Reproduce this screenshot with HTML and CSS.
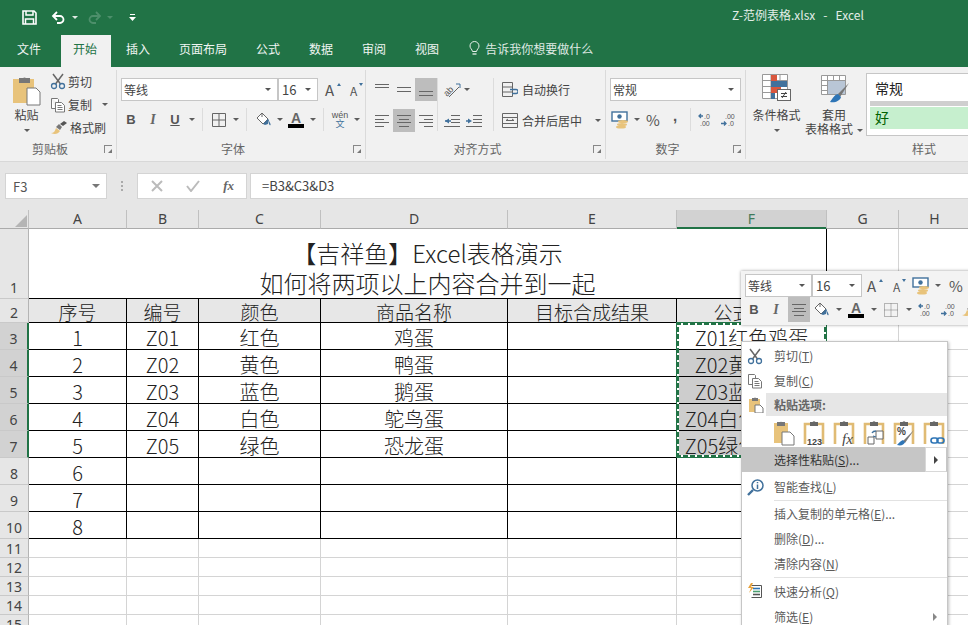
FILE: index.html
```html
<!DOCTYPE html>
<html lang="zh-CN">
<head>
<meta charset="utf-8">
<title>Z-范例表格.xlsx - Excel</title>
<link rel="stylesheet" href="styles.css">
</head>
<body>
<svg class="defs" xmlns="http://www.w3.org/2000/svg">
  <symbol id="scissors" viewBox="0 0 16 17">
    <path d="M3 1l7.500 10M13 1L5.500 11" fill="none" stroke="#666" stroke-width="1.500"/>
    <circle cx="4" cy="13" r="2.500" fill="none" stroke="#41719c" stroke-width="1.300"/>
    <circle cx="12" cy="13" r="2.500" fill="none" stroke="#41719c" stroke-width="1.300"/>
  </symbol>
  <symbol id="copy" viewBox="0 0 16 16">
    <path d="M1.500 1.500h6l1 1v3M1.500 1.500v10h3.500" fill="#fff" stroke="#777"/>
    <path d="M5.500 5.500h6l3 3v6.500h-9z" fill="#fff" stroke="#777"/>
    <path d="M7.500 8.500h4M7.500 10.500h5M7.500 12.500h5" stroke="#777"/>
  </symbol>
  <symbol id="brush" viewBox="0 0 18 14">
    <path d="M1 12c3 0 4-2 5-5l4 3c-2 3-5 4-9 2z" fill="#e8c37b"/>
    <path d="M6 6l3-3 3 3-2 3z" fill="#777"/>
    <path d="M10 3l4-3 3 2-4 3z" fill="#555"/>
  </symbol>
  <symbol id="money" viewBox="0 0 18 18">
    <rect x="1" y="1" width="15" height="9" fill="#fff" stroke="#41719c" stroke-width="1.400"/>
    <circle cx="8.500" cy="5.500" r="2.200" fill="#41719c"/>
    <ellipse cx="12" cy="10.500" rx="5" ry="1.500" fill="#e8c37b"/>
    <ellipse cx="11" cy="13.500" rx="5" ry="1.500" fill="#e8c37b"/>
    <ellipse cx="10" cy="16" rx="5" ry="1.500" fill="#e8c37b"/>
  </symbol>
  <symbol id="fill" viewBox="0 0 18 16">
    <path d="M8 1l6 6-5 5-6-6z" fill="#fff" stroke="#666"/>
    <path d="M8 1v4" stroke="#666"/>
    <path d="M9 12l5-5 1 1-1 4-3 1z" fill="#41719c"/>
    <path d="M15 9c1 2 2 3 1.500 4s-2 0-1.500-4z" fill="#41719c"/>
  </symbol>
  <symbol id="inc" viewBox="0 0 16 14">
    <path d="M5 3H1M3 1L1 3l2 2" fill="none" stroke="#41719c" stroke-width="1.300"/>
    <text x="6" y="6" font-size="7" font-family="Liberation Sans, sans-serif" fill="#555">.0</text>
    <text x="2" y="13" font-size="7" font-family="Liberation Sans, sans-serif" fill="#555">.00</text>
  </symbol>
  <symbol id="dec" viewBox="0 0 16 14">
    <text x="5" y="6" font-size="7" font-family="Liberation Sans, sans-serif" fill="#555">.00</text>
    <path d="M1 10.500h5M4 8.500l2 2-2 2" fill="none" stroke="#41719c" stroke-width="1.300"/>
    <text x="8" y="13" font-size="7" font-family="Liberation Sans, sans-serif" fill="#555">.0</text>
  </symbol>
  <symbol id="clip" viewBox="0 0 22 27">
    <path d="M2 25V5h18v20" fill="#fff" stroke="#e0bb74" stroke-width="2.600"/>
    <path d="M7 3h2.500a2 2 0 0 1 3 0H15v4H7z" fill="#666"/>
  </symbol>
</svg>

<div class="app">
  <header class="titlebar">
    <div class="qat">
      <svg class="q-save" width="15" height="15" viewBox="0 0 15 15"><path d="M1 1h11l2 2v11H1z" fill="none" stroke="#fff" stroke-width="1.600"/><path d="M4 1v4h7V1M3.500 14V9h8v5" fill="none" stroke="#fff" stroke-width="1.500"/></svg>
      <svg class="q-undo" width="15" height="13" viewBox="0 0 15 13"><path d="M2 5h7a3.500 3.500 0 0 1 0 7H6" fill="none" stroke="#fff" stroke-width="1.800"/><path d="M6 1L2 5l4 4" fill="none" stroke="#fff" stroke-width="1.800"/></svg>
      <span class="caret white"></span>
      <svg class="q-redo" width="15" height="13" viewBox="0 0 15 13"><path d="M13 5H6a3.500 3.500 0 0 0 0 7h3" fill="none" stroke="#4d8f6b" stroke-width="1.800"/><path d="M9 1l4 4-4 4" fill="none" stroke="#4d8f6b" stroke-width="1.800"/></svg>
      <span class="caret dim"></span>
      <svg class="q-more" width="7" height="7" viewBox="0 0 7 7"><path d="M1 .5h5" stroke="#fff"/><path d="M0 3h7L3.500 7z" fill="#fff"/></svg>
    </div>
    <div class="doc">Z-范例表格.xlsx&nbsp;&nbsp; -&nbsp;&nbsp; Excel</div>
  </header>

  <nav class="tabs">
    <a class="tab first">文件</a>
    <a class="tab active">开始</a>
    <a class="tab">插入</a>
    <a class="tab">页面布局</a>
    <a class="tab">公式</a>
    <a class="tab">数据</a>
    <a class="tab">审阅</a>
    <a class="tab">视图</a>
    <div class="tell">
      <svg width="11" height="16" viewBox="0 0 11 16"><path d="M3.500 10.500C3 8 1 7.500 1 5a4.500 4.500 0 0 1 9 0c0 2.500-2 3-2.500 5.500z" fill="none" stroke="#e8f0eb"/><path d="M3.500 13h4" stroke="#e8f0eb" stroke-width="1.300"/></svg>
      <span>告诉我你想要做什么</span>
    </div>
  </nav>

  <section class="ribbon">
    <div class="group g-clip">
      <div class="body">
        <div class="paste">
          <svg width="30" height="31" viewBox="0 0 30 31"><path d="M1 4h21v24H1z" fill="#e8c37b"/><path d="M7 3h4a2.500 2.500 0 0 1 3 0h4v5H7z" fill="#777"/><path d="M15 13h9l4 4v13H15z" fill="#fff" stroke="#777"/></svg>
          <span>粘贴</span>
          <i class="caret"></i>
        </div>
        <div class="smalls">
          <div class="small"><svg width="16" height="17"><use href="#scissors"/></svg><span>剪切</span></div>
          <div class="small"><svg width="16" height="16"><use href="#copy"/></svg><span>复制</span><i class="caret small-caret"></i></div>
          <div class="small"><svg width="18" height="14"><use href="#brush"/></svg><span>格式刷</span></div>
        </div>
      </div>
      <div class="foot"><span class="lbl">剪贴板</span><i class="launch"></i></div>
    </div>

    <div class="group g-font">
      <div class="body col">
        <div class="row">
          <div class="box fontname"><span>等线</span><i class="caret"></i></div>
          <div class="box fontsize"><span>16</span><i class="caret"></i></div>
          <div class="grow"><b class="big">A</b><i class="up"></i></div>
          <div class="shrink"><b class="little">A</b><i class="up"></i></div>
        </div>
        <div class="row second">
          <div class="tool bold">B</div>
          <div class="tool ital">I</div>
          <div class="tool under">U</div>
          <div class="tool n"><i class="caret"></i></div>
          <div class="sep"></div>
          <div class="tool"><svg width="14" height="14" viewBox="0 0 14 14"><path d="M.5.500h13v13H.500zM7 .5v13M.5 7h13" fill="none" stroke="#666"/></svg></div>
          <div class="tool n"><i class="caret"></i></div>
          <div class="sep"></div>
          <div class="tool"><svg width="18" height="16"><use href="#fill"/></svg></div>
          <div class="tool n"><i class="caret"></i></div>
          <div class="tool"><span class="fcolor">A</span></div>
          <div class="tool n"><i class="caret"></i></div>
          <div class="sep"></div>
          <div class="tool wen"><small>wén</small><em>文</em></div>
          <div class="tool n"><i class="caret"></i></div>
        </div>
      </div>
      <div class="foot"><span class="lbl">字体</span><i class="launch"></i></div>
    </div>

    <div class="group g-align">
      <div class="body">
        <div class="acol">
          <div class="row">
            <div class="tool"><svg width="14" height="13" viewBox="0 0 14 13"><path d="M0 1.500h14M0 4.500h14" stroke="#666"/></svg></div>
            <div class="tool"><svg width="14" height="13" viewBox="0 0 14 13"><path d="M0 4.500h14M0 8.500h14" stroke="#666"/></svg></div>
            <div class="tool on"><svg width="14" height="13" viewBox="0 0 14 13"><path d="M0 8.500h14M0 12.500h14" stroke="#666"/></svg></div>
          </div>
          <div class="row">
            <div class="tool"><svg width="14" height="12" viewBox="0 0 14 12"><path d="M0 .5h14M0 4.500h9M0 7.500h14M0 11.500h9" stroke="#666"/></svg></div>
            <div class="tool on"><svg width="14" height="12" viewBox="0 0 14 12"><path d="M0 .5h14M2 4.500h10M0 7.500h14M2 11.500h10" stroke="#666"/></svg></div>
            <div class="tool"><svg width="14" height="12" viewBox="0 0 14 12"><path d="M0 .5h14M5 4.500h9M0 7.500h14M5 11.500h9" stroke="#666"/></svg></div>
          </div>
        </div>
        <div class="vsep"></div>
        <div class="acol mid">
          <div class="row">
            <div class="tool"><svg width="17" height="16" viewBox="0 0 17 16"><text x="0" y="12" font-size="9" font-family="Liberation Sans, sans-serif" fill="#555" transform="rotate(-45 5 10)">ab</text><path d="M5 15L15 5" stroke="#666"/><path d="M12 2h4v4" stroke="#41719c" fill="none"/></svg></div>
            <div class="tool n tight"><i class="caret"></i></div>
          </div>
          <div class="row">
            <div class="tool"><svg width="16" height="12" viewBox="0 0 16 12"><path d="M7 .5h9M7 4.500h9M7 7.500h9M0 11.500h16" stroke="#666"/><path d="M5 3.500L1 6l4 2.500z" fill="#41719c"/><path d="M1 6h6" stroke="#41719c" stroke-width="1.500"/></svg></div>
            <div class="tool"><svg width="16" height="12" viewBox="0 0 16 12"><path d="M7 .5h9M7 4.500h9M7 7.500h9M0 11.500h16" stroke="#666"/><path d="M2 3.500L6 6 2 8.500z" fill="#41719c"/><path d="M0 6h4" stroke="#41719c" stroke-width="1.500"/></svg></div>
          </div>
        </div>
        <div class="vsep"></div>
        <div class="acol wrapcol">
          <div class="row text-btn">
            <svg width="16" height="15" viewBox="0 0 16 15"><path d="M.5.500h10v14H.500zM.5 5h10M.5 10h10" fill="none" stroke="#666"/><path d="M8 7.500h6a1.500 1.500 0 0 1 0 4H10" fill="none" stroke="#41719c" stroke-width="1.300"/></svg>
            <span>自动换行</span>
          </div>
          <div class="row text-btn">
            <svg width="16" height="15" viewBox="0 0 16 15"><path d="M.5.500h15v14H.500zM.5 4.500h15M.5 10.500h15M4 7.500h8M4 7.500l2-1.500M12 7.500l-2-1.500" fill="none" stroke="#666"/></svg>
            <span class="merge">合并后居中</span><i class="caret"></i>
          </div>
        </div>
      </div>
      <div class="foot"><span class="lbl">对齐方式</span><i class="launch"></i></div>
    </div>

    <div class="group g-num">
      <div class="body col">
        <div class="row"><div class="box numfmt"><span>常规</span><i class="caret"></i></div></div>
        <div class="row second">
          <div class="tool"><svg width="18" height="18"><use href="#money"/></svg></div>
          <div class="tool n"><i class="caret"></i></div>
          <div class="tool pct">%</div>
          <div class="tool comma">,</div>
          <div class="sep narrow"></div>
          <div class="tool"><svg width="16" height="14"><use href="#inc"/></svg></div>
          <div class="tool"><svg width="16" height="14"><use href="#dec"/></svg></div>
        </div>
      </div>
      <div class="foot"><span class="lbl">数字</span><i class="launch"></i></div>
    </div>

    <div class="group g-style">
      <div class="body">
        <div class="bigbtn cond">
          <svg width="29" height="27" viewBox="0 0 29 27"><path d="M.5.500h25v24H.500zM9 .5v24M18 .5v24M.5 6.500h25M.5 12.500h25M.5 18.500h25" fill="#fff" stroke="#999"/><path d="M9 1h6v6H9z" fill="#d9573e"/><path d="M9 7h16v6H9z" fill="#41719c"/><path d="M9 13h10v6H9z" fill="#d9573e"/><path d="M9 19h4v6H9z" fill="#41719c"/><rect x="15.500" y="15.500" width="13" height="11" fill="#fff" stroke="#666"/><path d="M19 19.500h6M19 22.500h6M24 18l-4 6" stroke="#444" fill="none"/></svg>
          <span>条件格式</span>
          <i class="caret"></i>
        </div>
        <div class="bigbtn tbl">
          <svg width="29" height="29" viewBox="0 0 29 29"><path d="M.5.500h24v19H.500zM6.500.5v19M12.500.5v19M18.500.5v19M.5 5.500h24M.5 10.500h24M.5 15.500h24" fill="#fff" stroke="#999"/><path d="M7 6h17v13H7z" fill="#b9c6d6"/><path d="M28 8L17 19l2 3z" fill="#777"/><path d="M17 19c-4 1-5 4-8 8 5 1 10-1 11-5z" fill="#2e75b6"/></svg>
          <span>套用</span>
          <span class="lastline">表格格式<i class="caret"></i></span>
        </div>
        <div class="gallery">
          <div class="st normal">常规</div>
          <div class="st good">好</div>
        </div>
      </div>
      <div class="foot"><span class="lbl">样式</span></div>
    </div>
  </section>

  <section class="formula">
    <div class="name"><span>F3</span><i class="caret"></i></div>
    <div class="dots"></div>
    <div class="fx">
      <svg width="12" height="12" viewBox="0 0 12 12"><path d="M1 1l10 10M11 1L1 11" stroke="#bbb" stroke-width="2"/></svg>
      <svg width="14" height="12" viewBox="0 0 14 12"><path d="M1 6l4 5 8-10" fill="none" stroke="#bbb" stroke-width="2"/></svg>
      <span>fx</span>
    </div>
    <div class="input">=B3&amp;C3&amp;D3</div>
  </section>

  <section class="sheet">
    <table>
      <colgroup>
        <col class="c0"><col class="ca"><col class="cb"><col class="cc"><col class="cd"><col class="ce"><col class="cf"><col class="cg"><col class="ch">
      </colgroup>
      <thead>
        <tr class="h-col">
          <th class="corner"><svg width="12" height="12" viewBox="0 0 12 12"><path d="M12 0v12H0z" fill="#b5b5b5"/></svg></th>
          <th>A</th><th>B</th><th>C</th><th>D</th><th>E</th><th class="cur">F</th><th>G</th><th>H</th>
        </tr>
      </thead>
      <tbody>
        <tr class="r1">
          <th>1</th>
          <td colspan="6" class="title">【吉祥鱼】Excel表格演示<br>如何将两项以上内容合并到一起</td>
          <td></td><td></td>
        </tr>
        <tr class="r2">
          <th>2</th>
          <td class="hd">序号</td><td class="hd">编号</td><td class="hd">颜色</td><td class="hd">商品名称</td><td class="hd">目标合成结果</td><td class="hd">公式结果</td>
          <td></td><td></td>
        </tr>
        <tr class="rd">
          <th class="cur">3</th>
          <td class="b">1</td><td class="b">Z01</td><td class="b">红色</td><td class="b">鸡蛋</td><td class="b"></td><td class="b">Z01红色鸡蛋</td>
          <td></td><td></td>
        </tr>
        <tr class="rd">
          <th class="cur">4</th>
          <td class="b">2</td><td class="b">Z02</td><td class="b">黄色</td><td class="b">鸭蛋</td><td class="b"></td><td class="b sel">Z02黄色鸭蛋</td>
          <td></td><td></td>
        </tr>
        <tr class="rd">
          <th class="cur">5</th>
          <td class="b">3</td><td class="b">Z03</td><td class="b">蓝色</td><td class="b">鹅蛋</td><td class="b"></td><td class="b sel">Z03蓝色鹅蛋</td>
          <td></td><td></td>
        </tr>
        <tr class="rd">
          <th class="cur">6</th>
          <td class="b">4</td><td class="b">Z04</td><td class="b">白色</td><td class="b">鸵鸟蛋</td><td class="b"></td><td class="b sel">Z04白色鸵鸟蛋</td>
          <td></td><td></td>
        </tr>
        <tr class="rd">
          <th class="cur">7</th>
          <td class="b">5</td><td class="b">Z05</td><td class="b">绿色</td><td class="b">恐龙蛋</td><td class="b"></td><td class="b sel">Z05绿色恐龙蛋</td>
          <td></td><td></td>
        </tr>
        <tr class="rd">
          <th>8</th>
          <td class="b">6</td><td class="b"></td><td class="b"></td><td class="b"></td><td class="b"></td><td class="b"></td>
          <td></td><td></td>
        </tr>
        <tr class="rd">
          <th>9</th>
          <td class="b">7</td><td class="b"></td><td class="b"></td><td class="b"></td><td class="b"></td><td class="b"></td>
          <td></td><td></td>
        </tr>
        <tr class="rd">
          <th>10</th>
          <td class="b">8</td><td class="b"></td><td class="b"></td><td class="b"></td><td class="b"></td><td class="b"></td>
          <td></td><td></td>
        </tr>
        <tr class="re"><th>11</th><td></td><td></td><td></td><td></td><td></td><td></td><td></td><td></td></tr>
        <tr class="re"><th>12</th><td></td><td></td><td></td><td></td><td></td><td></td><td></td><td></td></tr>
        <tr class="re"><th>13</th><td></td><td></td><td></td><td></td><td></td><td></td><td></td><td></td></tr>
        <tr class="re"><th>14</th><td></td><td></td><td></td><td></td><td></td><td></td><td></td><td></td></tr>
        <tr class="re"><th>15</th><td></td><td></td><td></td><td></td><td></td><td></td><td></td><td></td></tr>
      </tbody>
    </table>
    <div class="ants"></div>
  </section>

  <aside class="mini">
    <div class="mrow">
      <div class="box m-name"><span>等线</span><i class="caret"></i></div>
      <div class="box m-size"><span>16</span><i class="caret"></i></div>
      <div class="grow m-grow"><b class="big">A</b><i class="up"></i></div>
      <div class="shrink m-shrink"><b class="little">A</b><i class="up"></i></div>
      <svg class="m-money" width="18" height="18"><use href="#money"/></svg>
      <i class="caret m-c"></i>
      <span class="m-pct">%</span>
    </div>
    <div class="mrow lower">
      <div class="tool bold">B</div>
      <div class="tool ital">I</div>
      <div class="tool on"><svg width="14" height="12" viewBox="0 0 14 12"><path d="M0 .5h14M2 4.500h10M0 7.500h14M2 11.500h10" stroke="#666"/></svg></div>
      <div class="tool"><svg width="18" height="16"><use href="#fill"/></svg></div>
      <div class="tool n"><i class="caret"></i></div>
      <div class="tool"><span class="fcolor">A</span></div>
      <div class="tool n"><i class="caret"></i></div>
      <div class="tool"><svg width="14" height="14" viewBox="0 0 14 14"><path d="M.5.500h13v13H.500zM7 .5v13M.5 7h13" fill="none" stroke="#777" stroke-dasharray="1 1"/></svg></div>
      <div class="tool n"><i class="caret"></i></div>
      <div class="tool"><svg width="16" height="14"><use href="#inc"/></svg></div>
      <div class="tool"><svg width="16" height="14"><use href="#dec"/></svg></div>
      <div class="tool"><svg width="18" height="14"><use href="#brush"/></svg></div>
    </div>
  </aside>

  <aside class="menu">
    <div class="mi"><svg class="mic" width="16" height="17"><use href="#scissors"/></svg><span>剪切(<u>T</u>)</span></div>
    <div class="mi"><svg class="mic" width="16" height="16"><use href="#copy"/></svg><span>复制(<u>C</u>)</span></div>
    <div class="mi head">
      <svg class="mic" width="16" height="17" viewBox="0 0 16 17"><path d="M1 3h11v13H1z" fill="#e8c37b"/><path d="M4 2h2a1.500 1.500 0 0 1 2 0h2v3H4z" fill="#777"/><path d="M7 9h5l3 3v5H7z" fill="#fff" stroke="#777"/></svg>
      <span>粘贴选项:</span>
    </div>
    <div class="pastes">
      <svg width="22" height="27" viewBox="0 0 22 27"><path d="M1 4h14v20H1z" fill="#e8c37b"/><path d="M4 3h3a2 2 0 0 1 2 0h3v4H4z" fill="#777"/><path d="M9 13h8l4 4v9H9z" fill="#fff" stroke="#777"/></svg>
      <svg width="22" height="27" viewBox="0 0 22 27"><use href="#clip"/><text x="4" y="26" font-size="9" font-weight="700" font-family="Liberation Sans, sans-serif" fill="#444">123</text></svg>
      <svg width="22" height="27" viewBox="0 0 22 27"><use href="#clip"/><text x="9" y="25" font-size="15" font-style="italic" font-family="Liberation Serif, serif" fill="#444">fx</text></svg>
      <svg width="22" height="27" viewBox="0 0 22 27"><use href="#clip"/><path d="M5 18h6v7H5zM13 12h7v8h-7z" fill="#fff" stroke="#666"/><path d="M9 14c1-2 3-2 4-2M10 17l3 1" stroke="#41719c" fill="none" stroke-width="1.300"/></svg>
      <svg width="22" height="27" viewBox="0 0 22 27"><use href="#clip"/><text x="4" y="16" font-size="10" font-weight="700" font-family="Liberation Sans, sans-serif" fill="#444">%</text><path d="M21 11L10 22l2 2z" fill="#777"/><path d="M10 21c-3 1-4 3-6 5 4 1 7 0 8-3z" fill="#2e75b6"/></svg>
      <svg width="22" height="27" viewBox="0 0 22 27"><use href="#clip"/><rect x="8" y="19" width="7" height="5" rx="2.500" fill="none" stroke="#2e75b6" stroke-width="1.600"/><rect x="14" y="19" width="7" height="5" rx="2.500" fill="none" stroke="#2e75b6" stroke-width="1.600"/></svg>
    </div>
    <div class="mi special"><span>选择性粘贴(<u>S</u>)...</span><b class="arrowbox"><i class="tri"></i></b></div>
    <div class="mi smart">
      <svg class="mic" width="17" height="17" viewBox="0 0 17 17"><circle cx="10.500" cy="6.500" r="5.500" fill="#fff" stroke="#41719c" stroke-width="1.500"/><path d="M6 11l-5 5" stroke="#41719c" stroke-width="2.400"/><path d="M10.500 3v1.200M10.500 5.500V10" stroke="#41719c" stroke-width="1.500"/></svg>
      <span>智能查找(<u>L</u>)</span>
    </div>
    <div class="msep"></div>
    <div class="mi"><span>插入复制的单元格(<u>E</u>)...</span></div>
    <div class="mi"><span>删除(<u>D</u>)...</span></div>
    <div class="mi"><span>清除内容(<u>N</u>)</span></div>
    <div class="msep"></div>
    <div class="mi quick">
      <svg class="mic" width="16" height="15" viewBox="0 0 16 15"><path d="M4.500 2.500h10v12h-10" fill="#fff" stroke="#555"/><path d="M6 5.500h7" stroke="#2e75b6" stroke-width="1.600"/><path d="M6 8.500h7" stroke="#4c9f70" stroke-width="1.600"/><path d="M6 11.500h7" stroke="#555" stroke-width="1.600"/><path d="M4 0L1 5h3l-2 5 5-6H4l2-4z" fill="#e8a33d"/></svg>
      <span>快速分析(<u>Q</u>)</span>
    </div>
    <div class="mi filter"><span>筛选(<u>E</u>)</span><i class="tri dim"></i></div>
  </aside>
</div>
</body>
</html>
```

FILE: styles.css
```css
* { box-sizing: border-box; }
html, body { margin: 0; padding: 0; overflow: hidden; background: #fff; }
body { font-family: "Noto Sans CJK SC", "Noto Sans", sans-serif; font-size: 12px; color: #444; }
.defs { display: none; }
i, em { font-style: normal; }

.app { position: relative; width: 968px; height: 625px; overflow: hidden; display: flex; flex-direction: column; }

.caret { display: inline-block; flex: none; width: 0; height: 0; border-left: 3px solid transparent; border-right: 3px solid transparent; border-top: 3px solid #5c5c5c; }
.caret.white { border-top-color: #dfe9e3; margin-left: 6px; }
.caret.dim { border-top-color: #4d8f6b; margin-left: 5px; }

/* title */
.titlebar { height: 35px; background: #217346; flex: none; position: relative; display: flex; align-items: center; }
.qat { display: flex; align-items: center; padding-left: 22px; height: 31px; }
.q-undo { margin-left: 14px; }
.q-redo { margin-left: 9px; }
.q-more { margin-left: 16px; }
.doc { margin-left: 596px; margin-top: -7px; color: #e3eee8; font-size: 12px; white-space: nowrap; }

.tabs { height: 32px; background: #217346; flex: none; display: flex; align-items: stretch; color: #f0f5f2; }
.tab { padding: 0 13px 5px; margin-left: 3px; display: flex; align-items: center; line-height: 1; font-size: 12px; white-space: nowrap; }
.tab.first { margin-left: 4px; margin-right: 4px; }
.tab.active { background: #f1f1f1; color: #217346; padding: 0 14px 5px 12px; margin-right: -1px; }
.tell { display: flex; align-items: center; margin-left: 17px; gap: 5px; padding-bottom: 5px; color: #dfe9e3; }

/* ribbon */
.ribbon { height: 95px; background: #f1f1f1; flex: none; display: flex; border-bottom: 1px solid #d8d8d8; overflow: hidden; }
.group { display: flex; flex-direction: column; border-right: 1px solid #dadada; margin: 3px 0 2px; flex: none; }
.group .body { flex: 1; display: flex; min-height: 0; }
.group .body.col { flex-direction: column; }
.foot { height: 19px; flex: none; display: grid; grid-template-columns: 1fr auto 1fr; align-items: center; padding-right: 16px; padding-bottom: 1px; }
.lbl { grid-column: 2; color: #666; line-height: 1; }
.launch { grid-column: 3; justify-self: end; margin-right: -12px; width: 8px; height: 8px; border-left: 1px solid #888; border-top: 1px solid #888; position: relative; }
.launch::after { content: ""; position: absolute; right: 0; bottom: 0; width: 0; height: 0; border-left: 4px solid transparent; border-bottom: 4px solid #777; }

.g-clip { width: 117px; }
.g-font { width: 249px; }
.g-align { width: 240px; }
.g-num { width: 140px; }
.g-style { width: 372px; border-right: 0; }

.row { display: flex; align-items: center; }
.row.second { margin-top: 7px; }
.tool { width: 22px; height: 23px; display: flex; align-items: center; justify-content: center; flex: none; }
.tool.n { width: 11px; }
.tool.tight { width: 8px; }
.tool.on { background: #bdbdbd; }
.sep { width: 1px; height: 23px; background: #dcdcdc; margin: 0 5px; flex: none; }
.sep.narrow { margin: 0 4px; }
.vsep { width: 1px; height: 53px; background: #dcdcdc; margin-top: 8px; flex: none; }

.box { display: flex; align-items: center; justify-content: space-between; background: #fff; border: 1px solid #c6c6c6; height: 23px; padding: 0 6px 0 2px; color: #444; flex: none; }
.box .caret { border-top-color: #555; }

/* clipboard */
.paste { width: 31px; margin-left: 11px; margin-top: 5px; display: flex; flex-direction: column; align-items: center; flex: none; }
.paste span { line-height: 14px; margin-top: 2px; }
.paste .caret { margin-top: 7px; }
.smalls { margin-left: 8px; display: flex; flex-direction: column; }
.small { height: 23px; display: flex; align-items: center; gap: 2px; white-space: nowrap; }
.small svg { flex: none; }
.small-caret { margin-left: 8px; }

/* font */
.g-font .body { padding: 8px 0 0 4px; }
.g-font .second { margin-left: -1px; }
.fontname { width: 157px; }
.fontsize { width: 40px; padding-left: 3px; font-size: 13px; }
.grow, .shrink { position: relative; width: 22px; height: 22px; color: #555; font-weight: 400; }
.grow { margin-left: 5px; }
.big { font-size: 15px; font-weight: 400; position: absolute; left: 2px; top: 1px; line-height: 20px; }
.little { font-size: 12px; font-weight: 400; position: absolute; left: 6px; top: 3px; line-height: 18px; }
.up { position: absolute; left: 14px; top: 4px; width: 0; height: 0; border-left: 2px solid transparent; border-right: 2px solid transparent; border-bottom: 3px solid #41719c; }
.shrink .up { left: 15px; border-bottom: 0; border-top: 3px solid #41719c; }
.bold { font-family: "Liberation Sans", sans-serif; font-weight: 700; font-size: 13px; color: #555; }
.ital { font-family: "Liberation Serif", serif; font-style: italic; font-weight: 700; font-size: 14px; color: #666; }
.under { font-family: "Liberation Sans", sans-serif; font-weight: 700; font-size: 13px; color: #555; text-decoration: underline; }
.fcolor { font-family: "Liberation Sans", sans-serif; font-size: 14px; line-height: 12px; font-weight: 700; color: #666; border-bottom: 4px solid #000; width: 16px; text-align: center; display: block; }
.wen { flex-direction: column; line-height: 1; }
.wen small { font-size: 9px; font-family: "Liberation Sans", sans-serif; color: #555; }
.wen em { font-size: 9px; color: #41719c; margin-top: -1px; }

/* alignment */
.g-align .body { padding-left: 5px; }
.acol { display: flex; flex-direction: column; gap: 8px; padding-top: 8px; flex: none; }
.acol.mid { margin: 0 5px 0 3px; width: 47px; }
.g-align .vsep:first-of-type { margin-left: 5px; }
.wrapcol { margin-left: 8px; }
.text-btn { height: 23px; gap: 4px; white-space: nowrap; }
.merge + .caret { margin-left: 9px; }

/* number */
.g-num .body { padding: 8px 0 0 4px; }
.numfmt { width: 131px; }
.g-num .second { margin-left: -1px; }
.pct { font-size: 15px; color: #555; }
.comma { font-family: "Liberation Sans", sans-serif; font-weight: 700; font-size: 15px; padding-bottom: 8px; color: #555; }

/* styles */
.g-style .body { padding-left: 6px; }
.bigbtn { display: flex; flex-direction: column; align-items: center; flex: none; line-height: 14px; white-space: nowrap; }
.cond { width: 49px; padding-top: 4px; }
.cond svg { margin-bottom: 7px; }
.cond .caret { margin-top: 7px; }
.tbl { width: 56px; margin-left: 5px; padding-top: 5px; }
.tbl svg { margin: 0 0 4px 3px; }
.lastline .caret { margin-left: 4px; vertical-align: middle; }
.gallery { margin-left: 4px; margin-top: 3px; height: 63px; flex: 1; min-width: 0; background: #fff; border: 1px solid #c6c6c6; border-right: 0; padding: 4px 0 0 3px; display: flex; flex-direction: column; }
.st { padding-left: 5px; font-size: 14px; line-height: 21px; flex: none; }
.normal { color: #222; background: #fff; border-bottom: 5px solid #cfcfcf; height: 28px; }
.good { background: #c6efce; color: #006100; margin-top: 1px; height: 22px; }

/* formula */
.formula { height: 48px; flex: none; background: #e6e6e6; display: flex; padding: 11px 0 11px 5px; align-items: stretch; }
.name { width: 102px; background: #fff; border: 1px solid #d4d4d4; display: flex; align-items: center; justify-content: space-between; padding: 0 6px 0 7px; font-size: 13px; color: #555; }
.name .caret { border-left-width: 4px; border-right-width: 4px; border-top-width: 4px; border-top-color: #777; }
.dots { width: 2px; height: 10px; margin: 8px 14px 0 14px; background: repeating-linear-gradient(#aaa 0 2px, transparent 2px 4px); }
.fx { width: 110px; background: #fff; border: 1px solid #d4d4d4; display: flex; align-items: center; padding: 0 12px 0 13px; justify-content: space-between; font-family: "Liberation Serif", serif; font-style: italic; font-weight: 700; font-size: 13px; color: #666; }
.input { flex: 1; margin-left: 3px; background: #fff; border: 1px solid #d4d4d4; border-right: 0; padding-left: 11px; font-size: 13px; line-height: 24px; color: #444; }

/* sheet */
.sheet { flex: 1; min-height: 0; overflow: hidden; position: relative; background: #fff; }
table { table-layout: fixed; border-collapse: separate; border-spacing: 0; width: 971px; color: #222; }
.c0 { width: 29px; }
.ca { width: 98px; }
.cb { width: 72px; }
.cc { width: 122px; }
.cd { width: 187px; }
.ce { width: 169px; }
.cf { width: 150px; }
.cg { width: 72px; }
.ch { width: 72px; }
th { font-weight: 400; padding: 0; background: #e6e6e6; color: #444; font-size: 14px; line-height: 14px; font-family: "Noto Sans", sans-serif; border-right: 1px solid #b4b4b4; border-bottom: 1px solid #c9c9c9; vertical-align: bottom; overflow: hidden; }
td { padding: 0; border-right: 1px solid #d4d4d4; border-bottom: 1px solid #d4d4d4; text-align: center; white-space: nowrap; overflow: hidden; font-size: 20px; font-weight: 300; vertical-align: bottom; }
.h-col { height: 19px; }
.h-col th { border-bottom: 1px solid #ababab; vertical-align: middle; border-right-color: #c0c0c0; line-height: 18px; height: 19px; }
.h-col th.cur { background: #d2d2d2; border-bottom-color: #217346; box-shadow: inset 0 -1px 0 #217346; color: #3f7a5a; }
.h-col .corner { line-height: 0; }
.corner svg { display: block; margin: 3px 0 0 15px; }
tbody th.cur { background: #d2d2d2; border-right: 2px solid #217346; }
.r1 { height: 70px; }
.r2 { height: 24px; }
.rd { height: 27px; }
.re { height: 19px; }
.r1 th, .rd th { padding-bottom: 3px; }
.r2 th { padding-bottom: 2px; }
.re th { padding-bottom: 1px; }
.rd td { line-height: 23px; padding-top: 3px; }
.re td { line-height: 18px; }
.title { font-size: 24px; line-height: 30px; border-right: 1px solid #000; border-bottom: 1px solid #000; font-weight: 300; }
.hd { font-size: 19px; line-height: 21px; padding-top: 2px; background: #e7e7e7; border-right: 1px solid #000; border-bottom: 1px solid #000; }
.b { border-right: 1px solid #000; border-bottom: 1px solid #000; }
.sel { background: #cdcdcd; }
.ants { position: absolute; left: 676px; top: 112px; width: 151px; height: 136px; outline: 1px solid #217346; outline-offset: -1px;
  background:
    repeating-linear-gradient(90deg, #217346 0 5px, #fff 5px 7px) top / 100% 3px no-repeat,
    repeating-linear-gradient(90deg, #217346 0 5px, #fff 5px 7px) bottom / 100% 3px no-repeat,
    repeating-linear-gradient(0deg, #217346 0 5px, #fff 5px 7px) left / 3px 100% no-repeat,
    repeating-linear-gradient(0deg, #217346 0 5px, #fff 5px 7px) right / 3px 100% no-repeat; }

/* mini toolbar */
.mini { position: absolute; left: 741px; top: 271px; width: 240px; height: 54px; background: #f3f3f3; box-shadow: 0 0 3px rgba(0,0,0,.4); padding: 3px 0 0 4px; overflow: hidden; }
.mrow { display: flex; align-items: center; }
.m-name { width: 67px; }
.m-size { width: 50px; padding-left: 3px; font-size: 13px; }
.m-grow { margin-left: 3px; width: 22px; }
.m-money { margin-left: 3px; }
.m-c { margin-left: 5px; }
.m-pct { margin-left: 8px; font-size: 15px; color: #555; }
.lower { height: 25px; }
.lower .tool { height: 25px; }
.lower .tool.n { width: 13px; }
.lower .bold { width: 20px; margin-left: -1px; }
.lower .ital { width: 22px; margin-left: 1px; }
.lower .on { margin-left: 1px; }

/* context menu */
.menu { position: absolute; left: 741px; top: 341px; width: 207px; height: 300px; background: #fff; border: 1px solid #c6c6c6; box-shadow: 1px 1px 3px rgba(0,0,0,.25); padding-top: 2px; color: #5a5a5a; }
.mi { height: 24.5px; display: flex; align-items: center; padding-left: 32px; position: relative; white-space: nowrap; line-height: 1; }
.mic { position: absolute; left: 5px; top: 4px; }
.mi.head { height: 23px; margin-left: 24px; padding-left: 8px; background: #e6e6e6; font-weight: 700; color: #666; }
.head .mic { left: -18px; top: 3px; }
.pastes { height: 31px; display: flex; padding: 3px 0 0 31px; gap: 8px; }
.mi.special { height: 25px; background: #c6c6c6; color: #333; justify-content: space-between; padding-right: 0; }
.arrowbox { width: 22px; height: 25px; background: #fff; border: 1px solid #d8d8d8; border-right-color: #c6c6c6; display: flex; align-items: center; justify-content: center; }
.tri { width: 0; height: 0; border-top: 4px solid transparent; border-bottom: 4px solid transparent; border-left: 4px solid #444; }
.tri.dim { border-left-color: #888; }
.mi.smart { height: 24px; margin-top: 3px; }
.msep { height: 1px; background: #e2e2e2; margin: 1px 0 0 32px; }
.msep ~ .mi { height: 25px; }
.mi.quick { margin-top: 1px; }
.filter { justify-content: space-between; padding-right: 10px; }
```
